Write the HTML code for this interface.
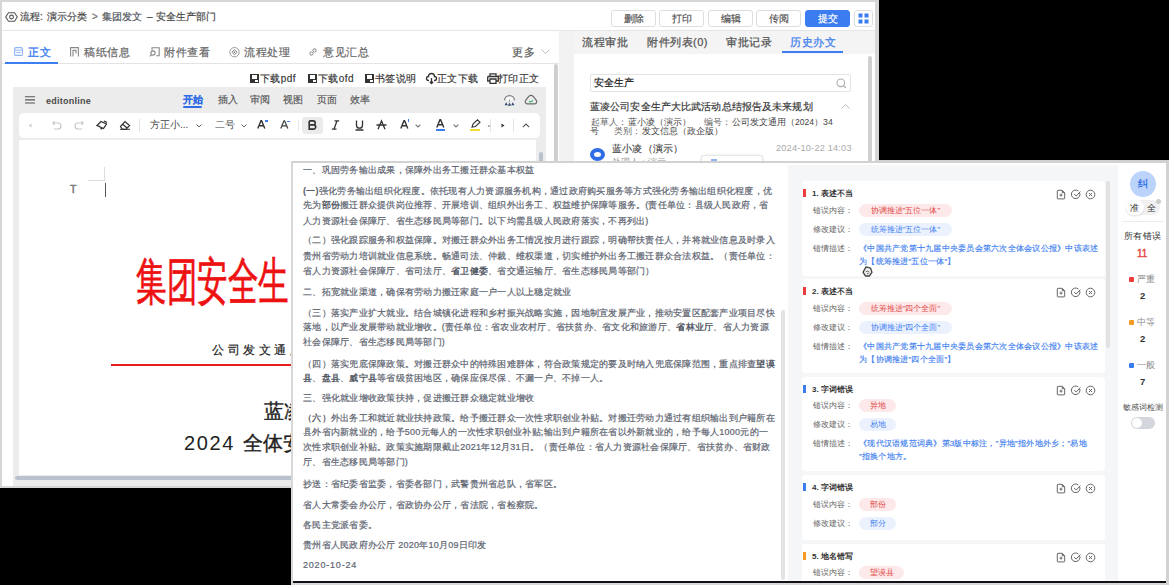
<!DOCTYPE html>
<html><head><meta charset="utf-8">
<style>
*{margin:0;padding:0;box-sizing:border-box}
html,body{width:1169px;height:585px;overflow:hidden;background:#000}
body{position:relative;font-family:"Liberation Sans",sans-serif;color:#333}
.a{position:absolute}
.t{position:absolute;white-space:nowrap;line-height:14px}
svg{display:block;position:absolute;overflow:visible}
#w1{left:0;top:0;width:879px;height:488px;background:#fff;border:2px solid #d6d6d6;border-right:4px solid #d6d6d6;overflow:hidden}
#w2{left:291px;top:161px;width:878px;height:424px;background:#fff;border:2px solid #d2d2d2;border-left:2px solid #d8d8d8;border-right:3px solid #d2d2d2;border-bottom:none;overflow:hidden}
.pg{position:absolute;width:1169px;height:585px}
/* w1 */
.bc{font-size:10px;color:#4a4a4a;top:10px;-webkit-text-stroke:0.2px #4a4a4a}
.tab{font-size:11px;letter-spacing:0.5px;color:#666;top:45px;-webkit-text-stroke:0.2px #666}
.dbt{font-size:10px;letter-spacing:0.4px;color:#333;top:72px;-webkit-text-stroke:0.15px #333}
.btn{position:absolute;top:10px;height:17px;width:45px;border:1px solid #dedede;border-radius:3px;background:#fff;font-size:9.5px;color:#555;text-align:center;line-height:15px;-webkit-text-stroke:0.2px currentColor}
.mt{font-size:9.5px;color:#555;top:93px;-webkit-text-stroke:0.15px currentColor}
.rt{font-size:11px;letter-spacing:0.5px;color:#555;top:35px;-webkit-text-stroke:0.25px currentColor}
/* w2 doc */
.d{position:absolute;white-space:nowrap;font-size:9px;letter-spacing:0.25px;line-height:14px;color:#5d6470;-webkit-text-stroke:0.2px #5d6470;left:303px}
.d b{font-weight:700;color:#555b66;-webkit-text-stroke:0}
.card{position:absolute;left:802px;width:303px;background:#fff;border-radius:3px}
.bar{position:absolute;left:803px;width:2.5px;height:8px}
.ct{position:absolute;margin-top:1px;left:812px;white-space:nowrap;font-size:8px;line-height:14px;font-weight:700;color:#333}
.lb{position:absolute;margin-top:1px;left:813px;white-space:nowrap;font-size:8px;line-height:14px;color:#666}
.pill{position:absolute;left:859px;height:13px;border-radius:7px;font-size:8px;line-height:13px;text-align:center;white-space:nowrap}
.pill.r{background:#fde9e9;color:#e24a4a}
.pill.b{background:#ebf2fe;color:#3d7ef0}
.ds{position:absolute;margin-top:1px;left:859px;white-space:nowrap;font-size:8px;letter-spacing:0.25px;line-height:14px;color:#3d7ef0;-webkit-text-stroke:0.15px #3d7ef0}
.ic{position:absolute;left:1056px;width:40px;height:11px}
.sq{position:absolute;left:1129px;width:5px;height:5px;border-radius:1px}
.sl{left:1137px;font-size:9px;color:#888}
.sn{left:1140px;font-size:9.5px;font-weight:700;color:#333}
</style></head>
<body>
<div id="w1" class="a"><div class="pg" style="left:-2px;top:-2px">
  <!-- header -->
  <div class="a" style="left:0;top:30px;width:878px;height:1px;background:#e6e6e6"></div>
  <!-- left panel -->
  <div class="a" style="left:0;top:63px;width:559px;height:1px;background:#e4e4e4"></div>
  <div class="a" style="left:5px;top:62px;width:53px;height:2px;background:#3d7ef0"></div>
  <!-- editor box -->
  <div class="a" style="left:13px;top:87px;width:533px;height:399px;background:#ececec"></div>
  <div class="a" style="left:19px;top:113px;width:521px;height:25px;background:#fff;border-radius:5px"></div>
  <div class="a" style="left:19px;top:140px;width:517px;height:335px;background:#fff"></div>
  <div class="a" style="left:15px;top:476px;width:530px;height:4px;background:#b9c1cc;border-radius:2px"></div>
  <div class="a" style="left:554px;top:64px;width:4px;height:420px;background:#cfcfcf;border-radius:2px"></div>
  <div class="a" style="left:559px;top:31px;width:15px;height:457px;background:#f2f2f2"></div>
  <div class="a" style="left:539px;top:152px;width:4px;height:40px;background:#b9c1cc;border-radius:2px"></div>
  <!-- right panel -->
  <div class="a" style="left:574px;top:31px;width:304px;height:23px;background:#f4f4f4"></div>
  <div class="a" style="left:868px;top:56px;width:4px;height:430px;background:#d0d0d0;border-radius:2px"></div>
  <!-- breadcrumb -->
  <svg style="left:5px;top:12px" width="13" height="10" viewBox="0 0 13 10"><path d="M3.5 0.7H9.5L12.3 5L9.5 9.3H3.5L0.7 5Z" fill="none" stroke="#555" stroke-width="1.1"/><circle cx="6.5" cy="5" r="1.9" fill="none" stroke="#555" stroke-width="1.1"/></svg>
  <div class="t bc" style="left:20px">流程:</div>
  <div class="t bc" style="left:47px">演示分类</div>
  <div class="t bc" style="left:92px;color:#888">&gt;</div>
  <div class="t bc" style="left:102px;color:#5a6270">集团发文</div>
  <div class="t bc" style="left:147px">–</div>
  <div class="t bc" style="left:156px">安全生产部门</div>
  <!-- buttons -->
  <div class="btn" style="left:611px">删除</div>
  <div class="btn" style="left:659px">打印</div>
  <div class="btn" style="left:708px">编辑</div>
  <div class="btn" style="left:756px">传阅</div>
  <div class="btn" style="left:805px;background:#3b7cf0;border-color:#3b7cf0;color:#fff">提交</div>
  <div class="btn" style="left:854px;width:19px"></div>
  <svg style="left:858px;top:13px" width="11" height="11" viewBox="0 0 11 11"><rect x="0.5" y="0.5" width="4" height="4" fill="#3b7cf0"/><rect x="6.5" y="0.5" width="4" height="4" fill="#3b7cf0"/><rect x="0.5" y="6.5" width="4" height="4" fill="#3b7cf0"/><rect x="6.5" y="6.5" width="4" height="4" fill="#3b7cf0"/></svg>
  <!-- left tabs -->
  <svg style="left:14px;top:47px" width="9" height="9" viewBox="0 0 9 9"><rect x="0.6" y="0.6" width="7.8" height="7.8" rx="1.2" fill="none" stroke="#8fb4f5" stroke-width="1.1"/><path d="M0.6 3.2H8.4M2.4 5.6H6.6" stroke="#8fb4f5" stroke-width="1"/></svg>
  <div class="t tab" style="left:28px;color:#3d7ef0;-webkit-text-stroke:0.35px #3d7ef0">正文</div>
  <svg style="left:70px;top:47px" width="9" height="10" viewBox="0 0 9 10"><path d="M0.6 9.4V0.6H8.4V9.4M3 9.4V3.4H6V6.6" fill="none" stroke="#888" stroke-width="1.1"/></svg>
  <div class="t tab" style="left:84px">稿纸信息</div>
  <svg style="left:149px;top:47px" width="11" height="10" viewBox="0 0 11 10"><path d="M3 3.2V0.7H10.2V8.8H7.2" fill="none" stroke="#888" stroke-width="1.1"/><circle cx="4" cy="6" r="2.1" fill="none" stroke="#888" stroke-width="1.1"/><path d="M2.5 7.6L0.8 9.3" stroke="#888" stroke-width="1.1"/></svg>
  <div class="t tab" style="left:164px">附件查看</div>
  <svg style="left:229px;top:47px" width="11" height="11" viewBox="0 0 11 11"><circle cx="5.5" cy="5.2" r="4.7" fill="none" stroke="#999" stroke-width="1"/><path d="M5.5 2.6L8.1 5.2L5.5 7.8L2.9 5.2Z" fill="none" stroke="#888" stroke-width="1"/><circle cx="5.5" cy="5.2" r="0.9" fill="#888"/></svg>
  <div class="t tab" style="left:244px">流程处理</div>
  <svg style="left:308px;top:47px" width="10" height="10" viewBox="0 0 10 10"><path d="M4.2 5.8L5.8 4.2M3.6 4.4L1.9 6.1A1.7 1.7 0 0 0 3.9 8.1L5.6 6.4M4.4 3.6L6.1 1.9A1.7 1.7 0 0 1 8.1 3.9L6.4 5.6" fill="none" stroke="#999" stroke-width="1.1"/></svg>
  <div class="t tab" style="left:323px">意见汇总</div>
  <div class="t tab" style="left:512px;color:#555">更多</div>
  <svg style="left:541px;top:49px" width="9" height="5" viewBox="0 0 9 5"><path d="M0.5 0.5L4.5 4.5L8.5 0.5" fill="none" stroke="#bbb" stroke-width="1"/></svg>
  <!-- doc buttons -->
  <svg style="left:250px;top:74px" width="9" height="9" viewBox="0 0 9 9"><rect x="0" y="0" width="9" height="9" fill="#333"/><rect x="2" y="1" width="5" height="4" fill="#fff"/><rect x="5" y="6" width="3" height="2" fill="#fff"/></svg>
  <div class="t dbt" style="left:260px">下载pdf</div>
  <svg style="left:308px;top:74px" width="9" height="9" viewBox="0 0 9 9"><rect x="0" y="0" width="9" height="9" fill="#333"/><rect x="2" y="1" width="5" height="4" fill="#fff"/><rect x="5" y="6" width="3" height="2" fill="#fff"/></svg>
  <div class="t dbt" style="left:318px">下载ofd</div>
  <svg style="left:365px;top:74px" width="9" height="9" viewBox="0 0 9 9"><rect x="0" y="0" width="9" height="9" fill="#333"/><rect x="2" y="1" width="5" height="4" fill="#fff"/><rect x="5" y="6" width="3" height="2" fill="#fff"/></svg>
  <div class="t dbt" style="left:375px">书签说明</div>
  <svg style="left:426px;top:73px" width="11" height="11" viewBox="0 0 11 11"><path d="M3 7.5H2.5A2 2 0 0 1 2.5 3.5A3 3 0 0 1 8.5 3.5A2 2 0 0 1 8.5 7.5H8M5.5 5V10.5M3.8 8.8L5.5 10.5L7.2 8.8" fill="none" stroke="#333" stroke-width="1.3"/></svg>
  <div class="t dbt" style="left:437px">正文下载</div>
  <svg style="left:487px;top:73px" width="12" height="11" viewBox="0 0 12 11"><path d="M3 3V0.8H9V3M0.7 3.5H11.3V8H9M3 8H0.7V3.5M3 6H9V10.3H3Z" fill="none" stroke="#333" stroke-width="1.3"/></svg>
  <div class="t dbt" style="left:498px">打印正文</div>
  <!-- editor menu -->
  <svg style="left:25px;top:96px" width="10" height="8" viewBox="0 0 10 8"><path d="M0 0.8H10M0 3.9H10M0 7H10" stroke="#555" stroke-width="1.1"/></svg>
  <div class="t" style="left:46px;top:94px;font-size:9px;font-weight:700;color:#4a4a4a;letter-spacing:0.25px">editonline</div>
  <div class="t mt" style="left:183px;color:#2f6de6;font-weight:700">开始</div>
  <div class="a" style="left:183px;top:106px;width:19px;height:2px;background:#2f6de6;border-radius:1px"></div>
  <div class="t mt" style="left:218px">插入</div>
  <div class="t mt" style="left:250px">审阅</div>
  <div class="t mt" style="left:283px">视图</div>
  <div class="t mt" style="left:317px">页面</div>
  <div class="t mt" style="left:350px">效率</div>
  <svg style="left:503px;top:94px" width="13" height="12" viewBox="0 0 13 12"><path d="M1.6 6.2A4.9 4.6 0 0 1 11.4 6.2" fill="#fafafa" stroke="#7a7a7a" stroke-width="1.3"/><path d="M6.5 5.4V8" stroke="#aaa" stroke-width="1"/><path d="M1.6 11.2L3.2 8.2L4.8 11.2ZM4.9 11.8L6.5 8.6L8.1 11.8ZM8.2 11.2L9.8 8.2L11.4 11.2Z" fill="#2f4870"/></svg>
  <svg style="left:524px;top:94px" width="14" height="11" viewBox="0 0 14 11"><path d="M3.2 9.8H10.8A2.2 2.2 0 0 0 12.2 6.2L9.4 2.6A3.4 3.4 0 0 0 4.6 2.6L1.8 6.2A2.2 2.2 0 0 0 3.2 9.8Z" fill="none" stroke="#6a6a6a" stroke-width="1.2" stroke-linejoin="round"/><path d="M5 7.4Q6.2 8 7.2 7.7L9 6.4" fill="none" stroke="#3cb26a" stroke-width="1.2"/></svg>
  <!-- toolbar -->
  <svg style="left:28px;top:123px" width="4" height="5" viewBox="0 0 4 5"><path d="M3.5 0.5L0.5 2.5L3.5 4.5Z" fill="#ccc"/></svg>
  <svg style="left:52px;top:120px" width="10" height="10" viewBox="0 0 10 10"><path d="M2.5 1L0.8 3L2.5 5M0.8 3H6A3 3 0 0 1 6 9H2" fill="none" stroke="#c6c6c6" stroke-width="1.1"/></svg>
  <svg style="left:74px;top:120px" width="10" height="10" viewBox="0 0 10 10"><path d="M7.5 1L9.2 3L7.5 5M9.2 3H4A3 3 0 0 0 4 9H8" fill="none" stroke="#c6c6c6" stroke-width="1.1"/></svg>
  <svg style="left:96px;top:120px" width="12" height="10" viewBox="0 0 12 10"><path d="M1 5.5L5 1.5L10.5 4L7.5 8.5Z M3 6L6 9.3" fill="none" stroke="#333" stroke-width="1.3"/><path d="M8 1L11 2.5" stroke="#333" stroke-width="1.3"/></svg>
  <svg style="left:119px;top:120px" width="12" height="10" viewBox="0 0 12 10"><path d="M1.5 6.5L6 1.5L10.5 5.5L7 9.3H3.5Z M4 4.5L8 8" fill="none" stroke="#333" stroke-width="1.2"/><path d="M1 9.3H11" stroke="#333" stroke-width="1"/></svg>
  <div class="a" style="left:139px;top:119px;width:1px;height:13px;background:#e2e2e2"></div>
  <div class="t" style="left:150px;top:118px;font-size:10px;color:#444">方正小...</div>
  <svg style="left:196px;top:124px" width="6" height="4" viewBox="0 0 6 4"><path d="M0.5 0.5L3 3L5.5 0.5" fill="none" stroke="#666" stroke-width="1"/></svg>
  <div class="t" style="left:215px;top:118px;font-size:10px;color:#444">二号</div>
  <svg style="left:241px;top:124px" width="6" height="4" viewBox="0 0 6 4"><path d="M0.5 0.5L3 3L5.5 0.5" fill="none" stroke="#666" stroke-width="1"/></svg>
  <svg style="left:257px;top:120px" width="10" height="9" viewBox="0 0 10 9"><path d="M0.8 8.5L4 0.8H4.6L7.8 8.5M2 5.8H6.6" fill="none" stroke="#333" stroke-width="1.4"/></svg>
  <div class="a" style="left:265px;top:120px;width:3px;height:2px;background:#3b7cf0"></div>
  <svg style="left:280px;top:120px" width="10" height="9" viewBox="0 0 10 9"><path d="M0.8 8.5L4 0.8H4.6L7.8 8.5M2 5.8H6.6" fill="none" stroke="#444" stroke-width="1.3"/></svg>
  <div class="a" style="left:287px;top:121px;width:3px;height:1px;background:#3b7cf0"></div>
  <div class="a" style="left:298px;top:120px;width:1px;height:11px;background:#e8e8e8"></div>
  <div class="a" style="left:302px;top:117px;width:21px;height:17px;background:#ebebeb;border-radius:3px"></div>
  <svg style="left:308px;top:120px" width="9" height="10" viewBox="0 0 9 10"><path d="M1.2 0.9H5.2A2 2 0 0 1 5.2 4.9H1.2V9.1H5.6A2.1 2.1 0 0 0 5.6 4.9M1.2 0.9V4.9" fill="none" stroke="#333" stroke-width="1.6"/></svg>
  <svg style="left:331px;top:120px" width="9" height="10" viewBox="0 0 9 10"><path d="M3.5 0.8H8.2M0.8 9.2H5.5M6 0.8L3 9.2" fill="none" stroke="#333" stroke-width="1.3"/></svg>
  <svg style="left:355px;top:120px" width="9" height="11" viewBox="0 0 9 11"><path d="M1.5 0.5V5.2A3 3 0 0 0 7.5 5.2V0.5M0.5 10H8.5" fill="none" stroke="#333" stroke-width="1.3"/></svg>
  <svg style="left:376px;top:120px" width="11" height="10" viewBox="0 0 11 10"><path d="M2 9.3L5.5 1L9 9.3M0.5 5H10.5" fill="none" stroke="#333" stroke-width="1.3"/></svg>
  <svg style="left:400px;top:120px" width="10" height="9" viewBox="0 0 10 9"><path d="M0.8 8.5L4 0.8H4.6L7.8 8.5M2 5.8H6.6" fill="none" stroke="#333" stroke-width="1.4"/></svg>
  <div class="a" style="left:408px;top:119px;width:1px;height:3px;background:#3b7cf0"></div>
  <svg style="left:415px;top:124px" width="6" height="4" viewBox="0 0 6 4"><path d="M0.6 0.6L3 3L5.4 0.6" fill="none" stroke="#777" stroke-width="1.1"/></svg>
  <svg style="left:436px;top:119px" width="10" height="9" viewBox="0 0 10 9"><path d="M0.8 8.5L4 0.8H4.6L7.8 8.5M2 5.8H6.6" fill="none" stroke="#333" stroke-width="1.4"/></svg>
  <div class="a" style="left:436px;top:129px;width:9px;height:2px;background:#3b7cf0"></div>
  <svg style="left:453px;top:124px" width="6" height="4" viewBox="0 0 6 4"><path d="M0.6 0.6L3 3L5.4 0.6" fill="none" stroke="#777" stroke-width="1.1"/></svg>
  <svg style="left:471px;top:119px" width="10" height="9" viewBox="0 0 10 9"><path d="M1 8L2 5L6.5 0.8L9 3.2L4.5 7.5Z" fill="none" stroke="#333" stroke-width="1.1"/></svg>
  <div class="a" style="left:470px;top:129px;width:10px;height:2px;background:#f0dc30"></div>
  <div class="a" style="left:488px;top:125px;width:2px;height:2px;background:#999;border-radius:1px"></div>
  <div class="a" style="left:490px;top:119px;width:1px;height:13px;background:#e6e6e6"></div>
  <svg style="left:501px;top:123px" width="4" height="5" viewBox="0 0 4 5"><path d="M0.5 0.5L3.5 2.5L0.5 4.5Z" fill="#333"/></svg>
  <div class="a" style="left:513px;top:119px;width:1px;height:13px;background:#e6e6e6"></div>
  <svg style="left:522px;top:123px" width="8" height="5" viewBox="0 0 8 5"><path d="M0.8 4.2L4 1L7.2 4.2" fill="none" stroke="#555" stroke-width="1.1"/></svg>
  <!-- page -->
  <div class="a" style="left:88px;top:180px;width:17px;height:1px;background:#ddd"></div>
  <div class="a" style="left:104px;top:167px;width:1px;height:14px;background:#ddd"></div>
  <div class="a" style="left:105px;top:183px;width:1px;height:14px;background:#555"></div>
  <div class="t" style="left:70px;top:182px;font-size:10.5px;color:#777;-webkit-text-stroke:0.5px #777">T</div>
  <div class="t" style="left:136px;top:252px;font-size:51px;line-height:60px;color:#ee1111;-webkit-text-stroke:0.7px #ee1111;transform:scaleX(0.6);transform-origin:0 0;letter-spacing:0">集团安全生</div>
  <div class="t" style="left:212px;top:343px;font-size:12px;color:#222;font-family:'Liberation Serif',serif;letter-spacing:3.5px;-webkit-text-stroke:0.2px #222">公司发文通用〔2024〕34号</div>
  <div class="a" style="left:111px;top:364px;width:420px;height:2px;background:#e81c1c"></div>
  <div class="t" style="left:264px;top:400px;font-size:20px;line-height:22px;color:#222;-webkit-text-stroke:0.4px #222">蓝凌公司安全生产</div>
  <div class="t" style="left:184px;top:432px;font-size:20px;line-height:22px;color:#222;letter-spacing:1.6px">2024</div><div class="t" style="left:243px;top:432px;font-size:20px;line-height:22px;color:#222;-webkit-text-stroke:0.4px #222">全体安全生产大会</div>
  <!-- right panel -->
  <div class="t rt" style="left:582px">流程审批</div>
  <div class="t rt" style="left:647px">附件列表(0)</div>
  <div class="t rt" style="left:726px">审批记录</div>
  <div class="t rt" style="left:790px;color:#3d7ef0">历史办文</div>
  <div class="a" style="left:782px;top:51px;width:61px;height:2px;background:#3d7ef0"></div>
  <div class="a" style="left:590px;top:74px;width:261px;height:18px;border:1px solid #e3e3e3;border-radius:2px"></div>
  <div class="t" style="left:594px;top:76px;font-size:10px;color:#222;-webkit-text-stroke:0.2px #222">安全生产</div>
  <svg style="left:836px;top:78px" width="11" height="11" viewBox="0 0 11 11"><circle cx="4.8" cy="4.8" r="3.8" fill="none" stroke="#aaa" stroke-width="1.1"/><path d="M7.6 7.6L10 10" stroke="#aaa" stroke-width="1.1"/></svg>
  <div class="t" style="left:590px;top:100px;font-size:10px;letter-spacing:0.12px;color:#3a3a3a;-webkit-text-stroke:0.2px #3a3a3a">蓝凌公司安全生产大比武活动总结报告及未来规划</div>
  <svg style="left:841px;top:104px" width="9" height="5" viewBox="0 0 9 5"><path d="M0.5 4.5L4.5 0.5L8.5 4.5" fill="none" stroke="#bbb" stroke-width="1"/></svg>
  <div class="t" style="left:591px;top:115px;font-size:8.6px;color:#666">起草人：</div>
  <div class="t" style="left:628px;top:115px;font-size:8.6px;color:#444">蓝小凌（演示）</div>
  <div class="t" style="left:704px;top:115px;font-size:8.6px;color:#666">编号：</div>
  <div class="t" style="left:732px;top:115px;font-size:8.6px;color:#444">公司发文通用（2024）34</div>
  <div class="t" style="left:590px;top:124px;font-size:8.6px;color:#444">号</div>
  <div class="t" style="left:614px;top:124px;font-size:8.6px;color:#666">类别：</div>
  <div class="t" style="left:642px;top:124px;font-size:8.6px;color:#444">发文信息（政企版）</div>
  <div class="a" style="left:590px;top:148px;width:15px;height:13px;border-radius:50%;border:4px solid #2f6de6;background:#fff"></div>
  <div class="t" style="left:612px;top:142px;font-size:9.5px;letter-spacing:0.2px;color:#444;-webkit-text-stroke:0.15px #444">蓝小凌（演示）</div>
  <div class="t" style="left:776px;top:141px;font-size:9.2px;letter-spacing:0.2px;color:#aaa">2024-10-22 14:03</div>
  <div class="t" style="left:612px;top:155px;font-size:8.6px;color:#999">处理人：演示</div>
  <div class="a" style="left:701px;top:155px;width:62px;height:10px;background:#fff;border:1px solid #e6e6e6;border-radius:3px;box-shadow:0 0 3px rgba(0,0,0,.1)"></div>
  <div class="a" style="left:711px;top:159px;width:6px;height:2px;background:#8fb4f5"></div>
</div></div>

<div id="w2" class="a"><div class="pg" style="left:-293px;top:-163px">
  <div class="a" style="left:788px;top:165px;width:330px;height:420px;background:#f5f6f8"></div>
  <div class="a" style="left:781px;top:310px;width:4px;height:270px;background:#e3e3e3;border-radius:2px"></div>
  <div class="d" style="top:163px">一、巩固劳务输出成果，保障外出务工搬迁群众基本权益</div>
  <div class="d" style="top:184px"><b>(一)</b>强化劳务输出组织化程度。依托现有人力资源服务机构，通过政府购买服务等方式强化劳务输出组织化程度，优</div>
  <div class="d" style="top:198px">先为<b>部份</b>搬迁群众提供岗位推荐、开展培训、组织外出务工、权益维护保障等服务。(责任单位：县级人民政府，省</div>
  <div class="d" style="top:214px">人力资源社会保障厅、省生态移民局等部门。以下均需县级人民政府落实，不再列出)</div>
  <div class="d" style="top:233px">（二）强化跟踪服务和权益保障。对搬迁群众外出务工情况按月进行跟踪，明确帮扶责任人，并将就业信息及时录入</div>
  <div class="d" style="top:249px">贵州省劳动力培训就业信息系统。畅通司法、仲裁、维权渠道，切实维护外出务工搬迁群众合法权益。（责任单位：</div>
  <div class="d" style="top:264px">省人力资源社会保障厅、省司法厅、<b>省卫健委</b>、省交通运输厅、省生态移民局等部门）</div>
  <div class="d" style="top:285px">二、拓宽就业渠道，确保有劳动力搬迁家庭一户一人以上稳定就业</div>
  <div class="d" style="top:306px">（三）落实产业扩大就业。结合城镇化进程和乡村振兴战略实施，因地制宜发展产业，推动安置区配套产业项目尽快</div>
  <div class="d" style="top:320px">落地，以产业发展带动就业增收。(责任单位：省农业农村厅、省扶贫办、省文化和旅游厅、<b>省林业厅</b>、省人力资源</div>
  <div class="d" style="top:335px">社会保障厅、省生态移民局等部门)</div>
  <div class="d" style="top:357px">（四）落实兜底保障政策。对搬迁群众中的特殊困难群体，符合政策规定的要及时纳入兜底保障范围，重点排查<b>望谟</b></div>
  <div class="d" style="top:371px"><b>县</b>、<b>盘县</b>、<b>威宁县</b>等省级贫困地区，确保应保尽保、不漏一户、不掉一人。</div>
  <div class="d" style="top:391px">三、强化就业增收政策扶持，促进搬迁群众稳定就业增收</div>
  <div class="d" style="top:411px"><b>（六）</b>外出务工和就近就业扶持政策。给予搬迁群众一次性求职创业补贴。对搬迁劳动力通过有组织输出到户籍所在</div>
  <div class="d" style="top:425px">县外省内新就业的，给予500元每人的一次性求职创业补贴;输出到户籍所在省以外新就业的，给予每人1000元的一</div>
  <div class="d" style="top:440px">次性求职创业补贴。政策实施期限截止2021年12月31日。（责任单位：省人力资源社会保障厅、省扶贫办、省财政</div>
  <div class="d" style="top:455px">厅、省生态移民局等部门)</div>
  <div class="d" style="top:477px">抄送：省纪委省监委，省委各部门，武警贵州省总队，省军区。</div>
  <div class="d" style="top:498px">省人大常委会办公厅，省政协办公厅，省法院，省检察院。</div>
  <div class="d" style="top:518px">各民主党派省委。</div>
  <div class="d" style="top:538px">贵州省人民政府办公厅 2020年10月09日印发</div>
  <div class="d" style="top:558px;letter-spacing:0.8px">2020-10-24</div>
  <!-- error cards -->
  <div class="card" style="top:181px;height:95px"></div>
  <div class="bar" style="top:189px;background:#ee3b3b"></div>
  <div class="ct" style="top:186px">1. 表述不当</div>
  <div class="ic" style="top:189px"><svg width="40" height="11" viewBox="0 0 40 11"><path d="M2 1.3H6.2L8.7 3.8V9.2Q8.7 9.9 8 9.9H2Q1.3 9.9 1.3 9.2V2Q1.3 1.3 2 1.3Z" fill="none" stroke="#666" stroke-width="1"/><path d="M6.2 1.3V3.8H8.7" fill="#666" stroke="#666" stroke-width="0.6"/><path d="M5 4.6V7.6M3.5 6.1H6.5" stroke="#666" stroke-width="1"/><path d="M23.4 3.2A4.3 4.3 0 1 1 22.4 2" fill="none" stroke="#666" stroke-width="1"/><path d="M18.2 5.2L20.2 7L24.4 2.6" fill="none" stroke="#666" stroke-width="1"/><circle cx="34.5" cy="5.5" r="4.3" fill="none" stroke="#666" stroke-width="1"/><path d="M33 4L36 7M36 4L33 7" stroke="#666" stroke-width="1"/></svg></div>
  <div class="lb" style="top:203px">错误内容：</div><div class="pill r" style="top:204px;width:93px">协调推进”五位一体”</div>
  <div class="lb" style="top:222px">修改建议：</div><div class="pill b" style="top:223px;width:93px">统筹推进”五位一体”</div>
  <div class="lb" style="top:241px">错情描述：</div>
  <div class="ds" style="top:241px">《中国共产党第十九届中央委员会第六次全体会议公报》中该表述</div>
  <div class="ds" style="top:254px">为【统筹推进”五位一体”】</div>
  <svg style="left:862px;top:266px" width="11" height="11" viewBox="0 0 11 11"><path d="M4 0.9L8.6 2.2L10 6.4L7.3 10H3.6L1 6.4Z" fill="#eee" stroke="#444" stroke-width="1.3" stroke-linejoin="round"/><path d="M3.8 5.8Q5.5 4.2 7.4 6.2M5 7.4L6.6 7.6" fill="none" stroke="#555" stroke-width="0.9"/></svg>

  <div class="card" style="top:279px;height:94px"></div>
  <div class="bar" style="top:287px;background:#ee3b3b"></div>
  <div class="ct" style="top:284px">2. 表述不当</div>
  <div class="ic" style="top:287px"><svg width="40" height="11" viewBox="0 0 40 11"><path d="M2 1.3H6.2L8.7 3.8V9.2Q8.7 9.9 8 9.9H2Q1.3 9.9 1.3 9.2V2Q1.3 1.3 2 1.3Z" fill="none" stroke="#666" stroke-width="1"/><path d="M6.2 1.3V3.8H8.7" fill="#666" stroke="#666" stroke-width="0.6"/><path d="M5 4.6V7.6M3.5 6.1H6.5" stroke="#666" stroke-width="1"/><path d="M23.4 3.2A4.3 4.3 0 1 1 22.4 2" fill="none" stroke="#666" stroke-width="1"/><path d="M18.2 5.2L20.2 7L24.4 2.6" fill="none" stroke="#666" stroke-width="1"/><circle cx="34.5" cy="5.5" r="4.3" fill="none" stroke="#666" stroke-width="1"/><path d="M33 4L36 7M36 4L33 7" stroke="#666" stroke-width="1"/></svg></div>
  <div class="lb" style="top:301px">错误内容：</div><div class="pill r" style="top:302px;width:93px">统筹推进”四个全面”</div>
  <div class="lb" style="top:320px">修改建议：</div><div class="pill b" style="top:321px;width:93px">协调推进”四个全面”</div>
  <div class="lb" style="top:339px">错情描述：</div>
  <div class="ds" style="top:339px">《中国共产党第十九届中央委员会第六次全体会议公报》中该表述</div>
  <div class="ds" style="top:352px">为【协调推进”四个全面”】</div>

  <div class="card" style="top:377px;height:94px"></div>
  <div class="bar" style="top:385px;background:#3b7cf0"></div>
  <div class="ct" style="top:382px">3. 字词错误</div>
  <div class="ic" style="top:385px"><svg width="40" height="11" viewBox="0 0 40 11"><path d="M2 1.3H6.2L8.7 3.8V9.2Q8.7 9.9 8 9.9H2Q1.3 9.9 1.3 9.2V2Q1.3 1.3 2 1.3Z" fill="none" stroke="#666" stroke-width="1"/><path d="M6.2 1.3V3.8H8.7" fill="#666" stroke="#666" stroke-width="0.6"/><path d="M5 4.6V7.6M3.5 6.1H6.5" stroke="#666" stroke-width="1"/><path d="M23.4 3.2A4.3 4.3 0 1 1 22.4 2" fill="none" stroke="#666" stroke-width="1"/><path d="M18.2 5.2L20.2 7L24.4 2.6" fill="none" stroke="#666" stroke-width="1"/><circle cx="34.5" cy="5.5" r="4.3" fill="none" stroke="#666" stroke-width="1"/><path d="M33 4L36 7M36 4L33 7" stroke="#666" stroke-width="1"/></svg></div>
  <div class="lb" style="top:398px">错误内容：</div><div class="pill r" style="top:399px;width:37px">异地</div>
  <div class="lb" style="top:417px">修改建议：</div><div class="pill b" style="top:418px;width:37px">易地</div>
  <div class="lb" style="top:436px">错情描述：</div>
  <div class="ds" style="top:436px">《现代汉语规范词典》第3版中标注，”异地”指外地外乡；”易地</div>
  <div class="ds" style="top:449px">”指换个地方。</div>

  <div class="card" style="top:475px;height:65px"></div>
  <div class="bar" style="top:483px;background:#3b7cf0"></div>
  <div class="ct" style="top:480px">4. 字词错误</div>
  <div class="ic" style="top:483px"><svg width="40" height="11" viewBox="0 0 40 11"><path d="M2 1.3H6.2L8.7 3.8V9.2Q8.7 9.9 8 9.9H2Q1.3 9.9 1.3 9.2V2Q1.3 1.3 2 1.3Z" fill="none" stroke="#666" stroke-width="1"/><path d="M6.2 1.3V3.8H8.7" fill="#666" stroke="#666" stroke-width="0.6"/><path d="M5 4.6V7.6M3.5 6.1H6.5" stroke="#666" stroke-width="1"/><path d="M23.4 3.2A4.3 4.3 0 1 1 22.4 2" fill="none" stroke="#666" stroke-width="1"/><path d="M18.2 5.2L20.2 7L24.4 2.6" fill="none" stroke="#666" stroke-width="1"/><circle cx="34.5" cy="5.5" r="4.3" fill="none" stroke="#666" stroke-width="1"/><path d="M33 4L36 7M36 4L33 7" stroke="#666" stroke-width="1"/></svg></div>
  <div class="lb" style="top:497px">错误内容：</div><div class="pill r" style="top:498px;width:37px">部份</div>
  <div class="lb" style="top:516px">修改建议：</div><div class="pill b" style="top:517px;width:37px">部分</div>

  <div class="card" style="top:544px;height:50px"></div>
  <div class="bar" style="top:552px;background:#f59a23"></div>
  <div class="ct" style="top:549px">5. 地名错写</div>
  <div class="ic" style="top:552px"><svg width="40" height="11" viewBox="0 0 40 11"><path d="M2 1.3H6.2L8.7 3.8V9.2Q8.7 9.9 8 9.9H2Q1.3 9.9 1.3 9.2V2Q1.3 1.3 2 1.3Z" fill="none" stroke="#666" stroke-width="1"/><path d="M6.2 1.3V3.8H8.7" fill="#666" stroke="#666" stroke-width="0.6"/><path d="M5 4.6V7.6M3.5 6.1H6.5" stroke="#666" stroke-width="1"/><path d="M23.4 3.2A4.3 4.3 0 1 1 22.4 2" fill="none" stroke="#666" stroke-width="1"/><path d="M18.2 5.2L20.2 7L24.4 2.6" fill="none" stroke="#666" stroke-width="1"/><circle cx="34.5" cy="5.5" r="4.3" fill="none" stroke="#666" stroke-width="1"/><path d="M33 4L36 7M36 4L33 7" stroke="#666" stroke-width="1"/></svg></div>
  <div class="lb" style="top:565px">错误内容：</div><div class="pill r" style="top:566px;width:45px">望谟县</div>
  <div class="a" style="left:1106px;top:181px;width:4px;height:167px;background:#e2e2e2;border-radius:2px"></div>
  <!-- sidebar -->
  <div class="a" style="left:1130px;top:171px;width:26px;height:26px;border-radius:50%;background:#bcd3fb"></div>
  <div class="t" style="left:1138px;top:177px;font-size:10px;color:#2f6de6;-webkit-text-stroke:0.3px #2f6de6">纠</div>
  <div class="a" style="left:1126px;top:200px;width:34px;height:15px;border-radius:8px;background:#f1f1f1"></div>
  <div class="a" style="left:1126px;top:200px;width:18px;height:15px;border-radius:8px;background:#fff;box-shadow:0 1px 2px rgba(0,0,0,.12)"></div>
  <div class="t" style="left:1130px;top:201px;font-size:9px;color:#333">准</div>
  <div class="t" style="left:1147px;top:201px;font-size:9px;color:#333">全</div>
  <div class="a" style="left:1156px;top:199px;width:5px;height:5px;border-radius:50%;background:#ccc"></div>
  <div class="a" style="left:1122px;top:221px;width:42px;height:1px;background:#ececec"></div>
  <div class="t" style="left:1124px;top:229px;font-size:9px;letter-spacing:0.35px;color:#333">所有错误</div>
  <div class="t" style="left:1137px;top:247px;font-size:10px;color:#e84545;-webkit-text-stroke:0.4px #e84545">11</div>
  <div class="sq" style="top:277px;background:#ee3b3b"></div><div class="t sl" style="top:272px">严重</div>
  <div class="t sn" style="top:289px">2</div>
  <div class="sq" style="top:320px;background:#f59a23"></div><div class="t sl" style="top:315px">中等</div>
  <div class="t sn" style="top:332px">2</div>
  <div class="sq" style="top:363px;background:#3b7cf0"></div><div class="t sl" style="top:358px">一般</div>
  <div class="t sn" style="top:375px">7</div>
  <div class="t" style="left:1123px;top:401px;font-size:8px;color:#555">敏感词检测</div>
  <div class="a" style="left:1131px;top:417px;width:24px;height:12px;border-radius:6px;background:#d3d6dc"></div>
  <div class="a" style="left:1132px;top:418px;width:10px;height:10px;border-radius:50%;background:#fff"></div>
  <div class="a" style="left:293px;top:581px;width:874px;height:2px;background:#141018"></div>
  <div class="a" style="left:291px;top:583px;width:878px;height:2px;background:#d8d8d8"></div>
</div></div>
<div class="a" style="left:879px;top:160px;width:290px;height:1px;background:#cfcfcf"></div>
</body></html>
